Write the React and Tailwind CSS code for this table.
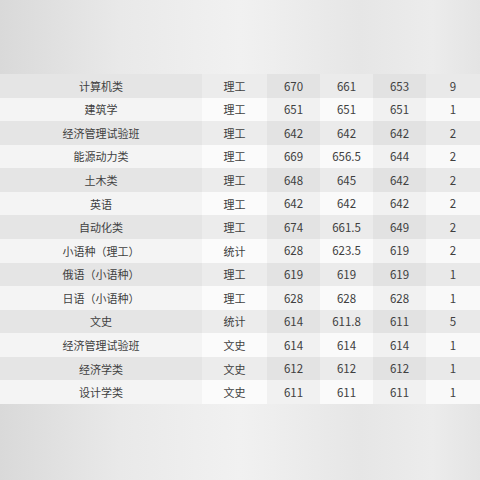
import React from "react";

const rows = [
  ["计算机类", "理工", "670", "661", "653", "9"],
  ["建筑学", "理工", "651", "651", "651", "1"],
  ["经济管理试验班", "理工", "642", "642", "642", "2"],
  ["能源动力类", "理工", "669", "656.5", "644", "2"],
  ["土木类", "理工", "648", "645", "642", "2"],
  ["英语", "理工", "642", "642", "642", "2"],
  ["自动化类", "理工", "674", "661.5", "649", "2"],
  ["小语种（理工）", "统计", "628", "623.5", "619", "2"],
  ["俄语（小语种）", "理工", "619", "619", "619", "1"],
  ["日语（小语种）", "理工", "628", "628", "628", "1"],
  ["文史", "统计", "614", "611.8", "611", "5"],
  ["经济管理试验班", "文史", "614", "614", "614", "1"],
  ["经济学类", "文史", "612", "612", "612", "1"],
  ["设计学类", "文史", "611", "611", "611", "1"],
];

const oddBg = ["bg-[#e5e5e5]", "bg-[#ececec]", "bg-[#e3e3e3]", "bg-[#ebebeb]", "bg-[#e2e2e2]", "bg-[#e9e9e9]"];
const evenBg = ["bg-[#f4f4f4]", "bg-[#fbfbfb]", "bg-[#f1f1f1]", "bg-[#fafafa]", "bg-[#f1f1f1]", "bg-[#f9f9f9]"];

export default function App() {
  return (
    <div
      className="w-[480px] h-[480px] flex flex-col pt-[74px] bg-[linear-gradient(90deg,#d9d9d9_0%,#e9e9e9_25%,#f1f1f1_50%,#e6e6e6_75%,#ececec_90%,#e4e4e4_100%)]"
      style={{ fontFamily: '"Noto Sans CJK SC", "Noto Sans", sans-serif' }}
    >
      <div className="grid grid-cols-[202px_65px_53px_53px_53px_54px] grid-rows-[repeat(14,23.57px)] text-[11px] text-[#404040]">
        {rows.map((r, i) =>
          r.map((c, j) => (
            <div
              key={i + "-" + j}
              className={
                "flex items-center justify-center leading-none pt-px " +
                (j >= 2 ? "text-[11.5px] " : "") +
                (i % 2 === 0 ? oddBg[j] : evenBg[j])
              }
            >
              {c}
            </div>
          ))
        )}
      </div>
      <div className="flex-1" />
    </div>
  );
}
